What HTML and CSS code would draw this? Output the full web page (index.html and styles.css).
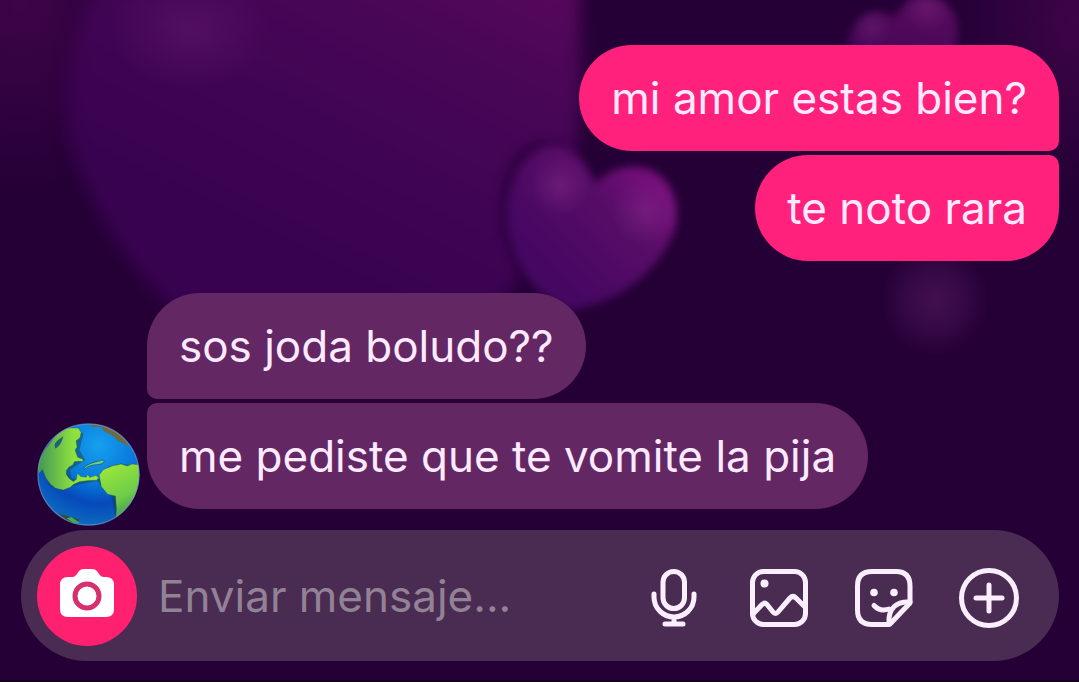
FILE: index.html
```
<!DOCTYPE html>
<html lang="es">
<head>
    <meta charset="UTF-8">
    <meta name="viewport" content="width=device-width, initial-scale=1.0">
    <title>Chat</title>
    <link rel="stylesheet" href="styles.css">
</head>
<body>
    <!-- Fondo con corazones -->
    <svg class="wallpaper" viewBox="0 0 1079 682" preserveAspectRatio="xMidYMid slice" aria-hidden="true">
        <defs>
            <linearGradient id="big" gradientUnits="userSpaceOnUse" x1="560" y1="-60" x2="380" y2="310">
                <stop offset="0" stop-color="#5c085d"/>
                <stop offset="0.35" stop-color="#490657"/>
                <stop offset="0.7" stop-color="#3f0454"/>
                <stop offset="1" stop-color="#380250"/>
            </linearGradient>
            <linearGradient id="mid" x1="1" y1="0.15" x2="0.3" y2="0.8">
                <stop offset="0" stop-color="#860f85"/>
                <stop offset="0.45" stop-color="#580d68"/>
                <stop offset="1" stop-color="#460762"/>
            </linearGradient>
            <linearGradient id="small" x1="0.7" y1="0" x2="0.4" y2="1">
                <stop offset="0" stop-color="#590b5e"/>
                <stop offset="1" stop-color="#3a0452"/>
            </linearGradient>
            <radialGradient id="glow">
                <stop offset="0" stop-color="#86308c" stop-opacity="0.8"/>
                <stop offset="1" stop-color="#86308c" stop-opacity="0"/>
            </radialGradient>
            <radialGradient id="corner">
                <stop offset="0" stop-color="#3e0448"/>
                <stop offset="1" stop-color="#3e0448" stop-opacity="0"/>
            </radialGradient>
            <radialGradient id="far">
                <stop offset="0" stop-color="#430f50"/>
                <stop offset="0.5" stop-color="#3b0c4a" stop-opacity="0.8"/>
                <stop offset="1" stop-color="#3b0c4a" stop-opacity="0"/>
            </radialGradient>
            <filter id="soft" x="-20%" y="-20%" width="140%" height="140%" color-interpolation-filters="sRGB">
                <feGaussianBlur stdDeviation="4"/>
            </filter>
            <filter id="softer" x="-20%" y="-20%" width="140%" height="140%" color-interpolation-filters="sRGB">
                <feGaussianBlur stdDeviation="8"/>
            </filter>
        </defs>
        <ellipse cx="20" cy="0" rx="150" ry="190" fill="url(#corner)"/>
        <ellipse cx="1079" cy="20" rx="120" ry="170" fill="url(#corner)"/>
        <path d="M110 -40C70 30 52 110 82 178C108 240 145 285 195 330L480 320C550 260 578 190 581 90L580 -40Z" fill="url(#big)" filter="url(#softer)"/>
        <ellipse cx="190" cy="30" rx="80" ry="60" fill="url(#glow)" opacity="0.3"/>
        <path d="M594 180C582 152 560 136 538 140C508 148 494 186 500 226C508 268 530 302 570 312C622 304 664 268 677 226C684 190 662 164 634 164C616 164 602 170 594 180Z" fill="#250036" opacity="0.5" filter="url(#soft)"/>
        <path d="M596 184C584 158 568 144 550 146C522 152 505 186 508 226C514 266 536 300 572 310C622 302 662 268 676 226C682 190 660 167 634 167C616 167 604 174 596 184Z" fill="url(#mid)" filter="url(#soft)"/>
        <circle cx="560" cy="186" r="30" fill="url(#glow)" opacity="0.55"/>
        <circle cx="645" cy="212" r="34" fill="url(#glow)" opacity="0.5"/>
        <path d="M895 18C880 6 856 12 849 38C846 60 870 90 910 100C945 85 962 50 957 22C950 -8 908 -14 895 18Z" fill="url(#small)" filter="url(#soft)"/>
        <circle cx="872" cy="28" r="20" fill="url(#glow)" opacity="0.35"/>
        <circle cx="926" cy="8" r="24" fill="url(#glow)" opacity="0.4"/>
        <ellipse cx="935" cy="300" rx="54" ry="56" fill="url(#far)"/>
    </svg>

    <main class="chat">
        <section class="messages">
            <div class="group sent">
                <p class="bubble">mi amor estas bien?</p>
                <p class="bubble">te noto rara</p>
            </div>

            <div class="received-row">
                <svg class="avatar" viewBox="52 40 306 306" role="img" aria-label="Planeta Tierra">
                    <defs>
                        <radialGradient id="sea" cx="0.6" cy="0.22" r="0.8">
                            <stop offset="0" stop-color="#16a0ee"/>
                            <stop offset="0.45" stop-color="#0878db"/>
                            <stop offset="0.7" stop-color="#0649bb"/>
                            <stop offset="1" stop-color="#0d6dc0"/>
                        </radialGradient>
                        <linearGradient id="land" x1="0" y1="0" x2="1" y2="0">
                            <stop offset="0" stop-color="#3f9356"/>
                            <stop offset="0.6" stop-color="#8de13f"/>
                            <stop offset="1" stop-color="#9be53d"/>
                        </linearGradient>
                        <linearGradient id="south" x1="0.3" y1="0" x2="0.7" y2="1">
                            <stop offset="0" stop-color="#9ae63c"/>
                            <stop offset="0.6" stop-color="#6dcc48"/>
                            <stop offset="1" stop-color="#3a9156"/>
                        </linearGradient>
                        <clipPath id="disc"><circle cx="205" cy="193" r="151"/></clipPath>
                    </defs>
                    <g clip-path="url(#disc)">
                        <circle cx="205" cy="193" r="153" fill="url(#sea)"/>
                        <path d="M170 60L190 72L178 120L195 150L172 165L150 180L155 205L175 208L240 206L262 170L300 160L358 170L358 270L285 325L272 250L240 225L232 212L165 225L130 240L90 228L60 160Z" fill="#16444d" opacity="0.5"/>
                        <path d="M50 165L75 120L110 75L140 55L175 55L183 68L180 84L168 93L171 112L165 120L173 142L187 147L190 154L172 154L163 155L158 165L147 171L139 181L139 193L149 206L160 214L169 207L172 189L182 199L198 201L203 193L209 202L226 196L235 201L230 210L206 211L180 214L161 222L151 231L130 239L107 234L92 222L78 203L68 178L58 190Z" fill="url(#land)" stroke="#285b38" stroke-width="1"/>
                        <path d="M104 105C108 93 119 87 130 79C127 94 119 110 106 116Z" fill="#245f78"/>
                        <path d="M237 194L250 178L275 168L302 162L320 168L335 162L365 166L365 220L350 260L320 300L286 324L288 295L285 257L262 252L243 229L239 208Z" fill="url(#south)" stroke="#285b38" stroke-width="1"/>
                        <path d="M192 173C205 159 228 155 248 150C256 152 249 162 235 163C220 164 204 167 192 178Z" fill="#68d184" stroke="#174f6a" stroke-width="2"/>
                        <path d="M214 42C258 40 305 66 326 110L290 91L278 78L252 65L243 52L214 51Z" fill="#6c6a3e"/>
                        <path d="M115 308L144 317L178 326L172 337L145 333Z" fill="#3d4a36"/>
                        <path d="M140 323L154 319L180 337L160 336Z" fill="#3aaf61"/>
                    </g>
                    <circle cx="205" cy="193" r="150" fill="none" stroke="#7d97c8" stroke-width="4" opacity="0.55"/>
                </svg>
                <div class="group received">
                    <p class="bubble">sos joda boludo??</p>
                    <p class="bubble">me pediste que te vomite la pija</p>
                </div>
            </div>
        </section>

        <form class="composer">
            <button class="camera" type="button" aria-label="Cámara">
                <svg viewBox="0 0 100 100">
                    <path d="M31 31H35C41 31 40 23 47 23H55C62 23 61 31 67 31H69Q77 31 77 39V63Q77 71 69 71H31Q23 71 23 63V39Q23 31 31 31Z" fill="#fff"/>
                    <circle cx="50" cy="50" r="12" fill="none" stroke="#d6306f" stroke-width="5"/>
                </svg>
            </button>
            <input class="message-input" type="text" placeholder="Enviar mensaje..." aria-label="Enviar mensaje">
            <button class="icon" type="button" aria-label="Mensaje de voz">
                <svg viewBox="0 0 60 60">
                    <rect x="19" y="3.5" width="21.5" height="37" rx="10.7"/>
                    <path d="M10 26V29A20 20 0 0 0 50 29V26M30 49V56M21 56H39"/>
                </svg>
            </button>
            <button class="icon" type="button" aria-label="Galería">
                <svg viewBox="0 0 60 60">
                    <rect x="3.5" y="3.5" width="53" height="53" rx="11"/>
                    <path d="M4 46L13 36.5Q15.5 34 18 36.5L24 44Q26.5 47 29 44L41 30Q44 27 47 30L56 39"/>
                    <circle class="dot" cx="15.5" cy="15.5" r="4"/>
                </svg>
            </button>
            <button class="icon" type="button" aria-label="Stickers">
                <svg viewBox="0 0 60 60">
                    <path d="M35 56.500H18Q3.500 56.500 3.500 42V18Q3.500 3.500 18 3.500H42Q56 3.500 56 18V35L36 56"/>
                    <path d="M56 34C43 33 34 40 35 55M20 37.500Q26 44 35 41"/>
                    <circle class="dot" cx="20" cy="24.5" r="3.8"/>
                    <circle class="dot" cx="40" cy="24.5" r="3.8"/>
                </svg>
            </button>
            <button class="icon" type="button" aria-label="Más">
                <svg viewBox="0 0 60 60">
                    <circle cx="30" cy="30" r="27.5"/>
                    <path d="M30 17V43M17 30H43"/>
                </svg>
            </button>
        </form>
    </main>
</body>
</html>
```

FILE: styles.css
```
* {
    box-sizing: border-box;
}
body {
    margin: 0;
    background-color: #250036;
    color: #fdeaff;
    font-family: Inter, "Noto Sans", sans-serif;
    font-size: 44px;
}
.wallpaper {
    position: absolute;
    top: 0;
    left: 0;
    width: 100%;
    height: 100%;
}
.chat {
    position: relative;
    min-height: 100vh;
    padding: 45px 20px 19px 21px;
    display: flex;
    flex-direction: column;
    justify-content: space-between;
    border-bottom: 2px solid #12001d;
}
.messages {
    display: flex;
    flex-direction: column;
    gap: 32px;
}
.group {
    display: flex;
    flex-direction: column;
    gap: 4px;
}
.sent {
    align-items: flex-end;
}
.received {
    align-items: flex-start;
    padding-bottom: 17px;
}
.received-row {
    display: flex;
    align-items: flex-end;
    gap: 7px;
    padding-left: 16px;
}
.avatar {
    flex: none;
    width: 103px;
    height: 103px;
}

/* Burbujas */
.bubble {
    margin: 0;
    padding: 25px 32px;
    line-height: 56px;
    border-radius: 53px;
}
.sent .bubble {
    background-color: #ff217c;
}
.sent .bubble:first-child {
    border-bottom-right-radius: 10px;
}
.sent .bubble:last-child {
    border-top-right-radius: 10px;
}
.received .bubble {
    background-color: #632764;
}
.received .bubble:first-child {
    border-bottom-left-radius: 10px;
}
.received .bubble:last-child {
    border-top-left-radius: 10px;
}

/* Barra para escribir */
.composer {
    display: flex;
    align-items: center;
    gap: 45px;
    height: 131px;
    padding: 0 40px 0 16px;
    border-radius: 66px;
    background-color: #4a2c53;
}
button {
    flex: none;
    padding: 0;
    border: none;
    background: none;
    cursor: pointer;
}
button svg {
    display: block;
    width: 100%;
    height: 100%;
}
.camera {
    width: 100px;
    height: 100px;
    margin-right: -24px;
    border-radius: 50%;
    background-color: #ff216f;
}
.message-input {
    flex: 1;
    min-width: 0;
    padding: 0;
    border: none;
    outline: none;
    background: none;
    color: #fdeaff;
    font: inherit;
}
.message-input::placeholder {
    color: #928295;
    opacity: 1;
}
.icon {
    width: 60px;
    height: 60px;
    margin-top: 4px;
}
.icon svg {
    fill: none;
    stroke: #fbeeff;
    stroke-width: 5;
    stroke-linecap: round;
    stroke-linejoin: round;
}
.icon .dot {
    fill: #fbeeff;
    stroke: none;
}
```
